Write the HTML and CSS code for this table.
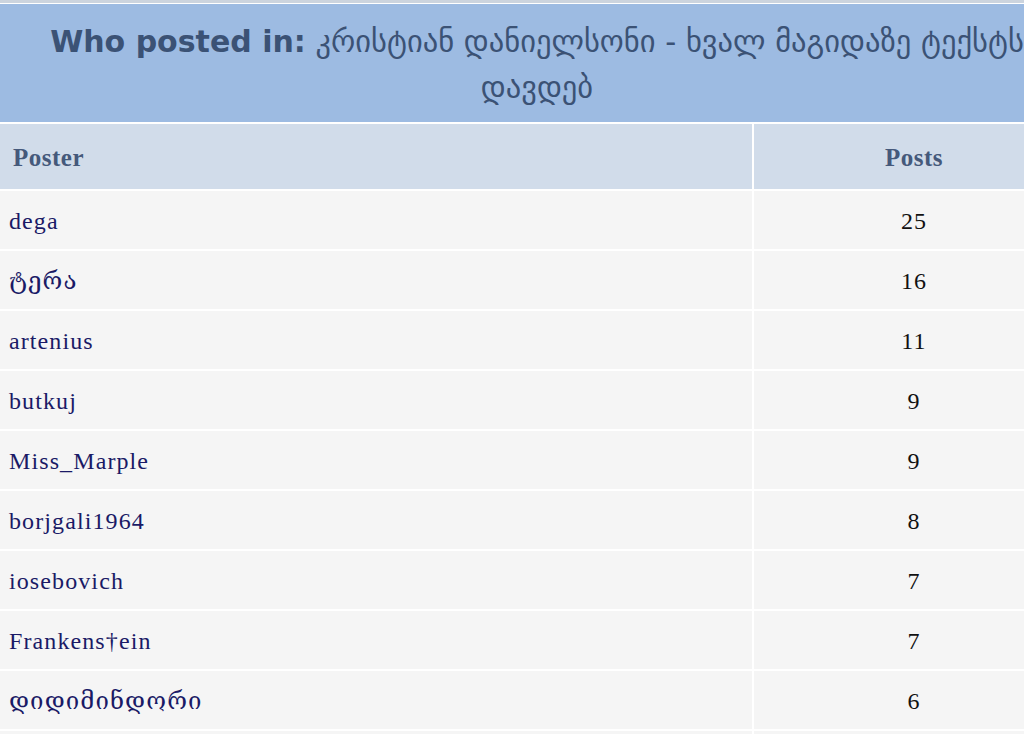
FILE: index.html
```html
<!DOCTYPE html>
<html lang="ka">
<head>
<meta charset="utf-8">
<title>Who posted in</title>
<link rel="stylesheet" href="styles.css">
</head>
<body>
<div class="page">
  <div class="topbar"></div>
  <table class="posters">
    <thead>
      <tr>
        <th class="title" colspan="2"><span class="title-lead">Who posted in:</span> <span class="title-topic">კრისტიან დანიელსონი - ხვალ მაგიდაზე ტექსტს დავდებ</span></th>
      </tr>
      <tr class="colhead">
        <th class="col-name">Poster</th>
        <th class="col-posts">Posts</th>
      </tr>
    </thead>
    <tbody>
      <tr><td class="name">dega</td><td class="count">25</td></tr>
      <tr><td class="name">ტერა</td><td class="count">16</td></tr>
      <tr><td class="name">artenius</td><td class="count">11</td></tr>
      <tr><td class="name">butkuj</td><td class="count">9</td></tr>
      <tr><td class="name">Miss_Marple</td><td class="count">9</td></tr>
      <tr><td class="name">borjgali1964</td><td class="count">8</td></tr>
      <tr><td class="name">iosebovich</td><td class="count">7</td></tr>
      <tr><td class="name">Frankens†ein</td><td class="count">7</td></tr>
      <tr><td class="name">დიდიმინდორი</td><td class="count">6</td></tr>
      <tr><td class="name">&nbsp;</td><td class="count">&nbsp;</td></tr>
    </tbody>
  </table>
</div>
</body>
</html>
```
FILE: styles.css
```css
html, body {
  margin: 0;
  padding: 0;
  background: #ffffff;
}

.page {
  width: 1024px;
  height: 734px;
  overflow: hidden;
  background: #ffffff;
}

.topbar {
  height: 3px;
  background: #ccd4de;
}

.posters {
  width: 1078px;
  margin: -1px 0 0 -2px;
  border-collapse: separate;
  border-spacing: 2px;
  font-family: "Liberation Serif", "DejaVu Serif", serif;
}

.title {
  height: 118px;
  box-sizing: border-box;
  padding: 13px 20px 9px 20px;
  background: #9dbbe2;
  color: #3b5275;
  font-family: "DejaVu Sans", Verdana, sans-serif;
  font-weight: normal;
  font-size: 30px;
  line-height: 46px;
  text-align: center;
}

.title-lead {
  font-weight: bold;
}

.title-topic {
  font-size: 30.5px;
}

.colhead th {
  height: 65px;
  box-sizing: border-box;
  background: #d1dcea;
  color: #45597b;
  font-size: 25px;
  font-weight: bold;
  letter-spacing: 0.5px;
  padding: 2px 0 0 0;
}

.col-name {
  width: 752px;
  text-align: left;
  padding-left: 13px !important;
}

.col-posts {
  text-align: center;
}

.posters td {
  height: 58px;
  box-sizing: border-box;
  background: #f5f5f5;
  font-size: 24px;
  letter-spacing: 1.1px;
  padding: 2px 0 0 0;
  vertical-align: middle;
}

.name {
  color: #1a1a66;
  padding-left: 9px !important;
  text-align: left;
}

.count {
  color: #111111;
  text-align: center;
  letter-spacing: 0.5px;
}
```
